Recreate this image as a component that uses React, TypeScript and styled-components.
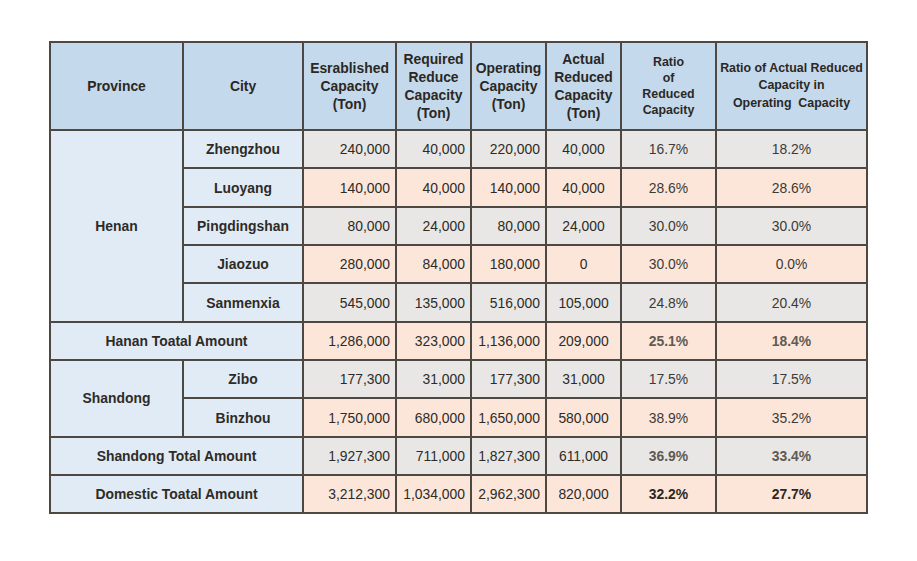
import React from "react";
import styled, { createGlobalStyle } from "styled-components";

const Global = createGlobalStyle`
  html, body { margin: 0; padding: 0; background: #ffffff; }
  body { font-family: "Liberation Sans", Arial, sans-serif; }
`;

const Page = styled.div`
  padding: 41px 0 0 49px;
`;

const Table = styled.table`
  border-collapse: collapse;
  table-layout: fixed;
  width: 817px;
  font-family: "Liberation Sans", Arial, sans-serif;
  color: #2e2b27;
`;

const HeadRow = styled.tr`
  height: 88px;
`;

const BodyRow = styled.tr`
  height: 38.35px;
`;

const Th = styled.th<{ $small?: boolean; $tight?: boolean }>`
  background: #c5d9ec;
  border: 2px solid #4d4942;
  font-weight: 700;
  font-size: ${(p) => (p.$small ? "12.4px" : "13.9px")};
  line-height: ${(p) => (p.$tight ? "16px" : p.$small ? "17.5px" : "18px")};
  text-align: center;
  vertical-align: middle;
  padding: 0 2px;
  color: #2b2824;
`;

type Tone = "blue" | "gray" | "peach";

const bgFor = (t: Tone) =>
  t === "blue" ? "#e1ebf6" : t === "gray" ? "#e8e7e5" : "#fce6da";

const Td = styled.td<{
  $tone: Tone;
  $align?: "left" | "right" | "center";
  $bold?: boolean;
  $color?: string;
}>`
  background: ${(p) => bgFor(p.$tone)};
  border: 2px solid #4d4942;
  font-size: 13.9px;
  font-weight: ${(p) => (p.$bold ? 700 : 400)};
  text-align: ${(p) => p.$align ?? "center"};
  vertical-align: middle;
  padding: ${(p) => (p.$align === "right" ? "0 5px 0 2px" : "0 2px")};
  color: ${(p) => p.$color ?? "#2e2b27"};
  white-space: nowrap;
`;

type Row = {
  tone: Tone;
  province?: { label: string; span: number };
  city?: string;
  total?: string;
  est: string;
  req: string;
  op: string;
  act: string;
  r1: string;
  r2: string;
  ratioStyle?: "normal" | "muted" | "strong";
};

const rows: Row[] = [
  { tone: "gray", province: { label: "Henan", span: 5 }, city: "Zhengzhou", est: "240,000", req: "40,000", op: "220,000", act: "40,000", r1: "16.7%", r2: "18.2%" },
  { tone: "peach", city: "Luoyang", est: "140,000", req: "40,000", op: "140,000", act: "40,000", r1: "28.6%", r2: "28.6%" },
  { tone: "gray", city: "Pingdingshan", est: "80,000", req: "24,000", op: "80,000", act: "24,000", r1: "30.0%", r2: "30.0%" },
  { tone: "peach", city: "Jiaozuo", est: "280,000", req: "84,000", op: "180,000", act: "0", r1: "30.0%", r2: "0.0%" },
  { tone: "gray", city: "Sanmenxia", est: "545,000", req: "135,000", op: "516,000", act: "105,000", r1: "24.8%", r2: "20.4%" },
  { tone: "peach", total: "Hanan Toatal Amount", est: "1,286,000", req: "323,000", op: "1,136,000", act: "209,000", r1: "25.1%", r2: "18.4%", ratioStyle: "muted" },
  { tone: "gray", province: { label: "Shandong", span: 2 }, city: "Zibo", est: "177,300", req: "31,000", op: "177,300", act: "31,000", r1: "17.5%", r2: "17.5%" },
  { tone: "peach", city: "Binzhou", est: "1,750,000", req: "680,000", op: "1,650,000", act: "580,000", r1: "38.9%", r2: "35.2%" },
  { tone: "gray", total: "Shandong Total Amount", est: "1,927,300", req: "711,000", op: "1,827,300", act: "611,000", r1: "36.9%", r2: "33.4%", ratioStyle: "muted" },
  { tone: "peach", total: "Domestic Toatal Amount", est: "3,212,300", req: "1,034,000", op: "2,962,300", act: "820,000", r1: "32.2%", r2: "27.7%", ratioStyle: "strong" },
];

const widths = [133, 120, 93, 75, 75, 75, 95, 151];

function RatioCells({ row }: { row: Row }) {
  const bold = row.ratioStyle === "muted" || row.ratioStyle === "strong";
  const color =
    row.ratioStyle === "muted" ? "#5f5a53" : row.ratioStyle === "strong" ? "#2b2824" : "#3d3a35";
  return (
    <>
      <Td $tone={row.tone} $bold={bold} $color={color}>{row.r1}</Td>
      <Td $tone={row.tone} $bold={bold} $color={color}>{row.r2}</Td>
    </>
  );
}

export default function App() {
  return (
    <>
      <Global />
      <Page>
        <Table>
          <colgroup>
            {widths.map((w, i) => (
              <col key={i} style={{ width: w }} />
            ))}
          </colgroup>
          <thead>
            <HeadRow>
              <Th>Province</Th>
              <Th>City</Th>
              <Th>Esrablished<br />Capacity<br />(Ton)</Th>
              <Th>Required<br />Reduce<br />Capacity<br />(Ton)</Th>
              <Th>Operating<br />Capacity<br />(Ton)</Th>
              <Th>Actual<br />Reduced<br />Capacity<br />(Ton)</Th>
              <Th $small $tight>Ratio<br />of<br />Reduced<br />Capacity</Th>
              <Th $small>Ratio of Actual Reduced<br />Capacity in<br />Operating&nbsp; Capacity</Th>
            </HeadRow>
          </thead>
          <tbody>
            {rows.map((r, i) => (
              <BodyRow key={i}>
                {r.total ? (
                  <Td $tone="blue" $bold colSpan={2}>{r.total}</Td>
                ) : (
                  <>
                    {r.province && (
                      <Td $tone="blue" $bold rowSpan={r.province.span}>{r.province.label}</Td>
                    )}
                    <Td $tone="blue" $bold>{r.city}</Td>
                  </>
                )}
                <Td $tone={r.tone} $align="right">{r.est}</Td>
                <Td $tone={r.tone} $align="right">{r.req}</Td>
                <Td $tone={r.tone} $align="right">{r.op}</Td>
                <Td $tone={r.tone}>{r.act}</Td>
                <RatioCells row={r} />
              </BodyRow>
            ))}
          </tbody>
        </Table>
      </Page>
    </>
  );
}
